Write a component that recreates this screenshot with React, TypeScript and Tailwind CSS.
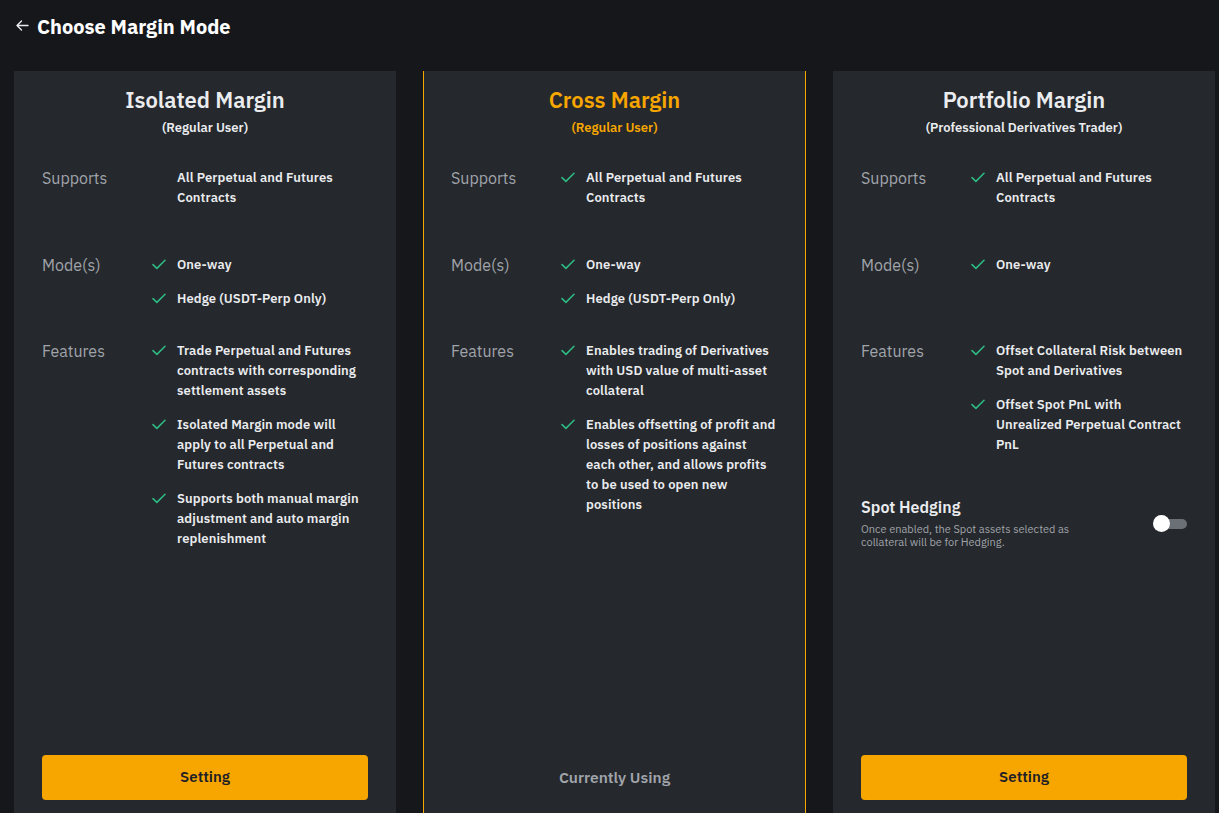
import React from "react";

type Item = { text: string; nowrap?: boolean };
type Section = { label: string; items: Item[]; check: boolean; pad: string };

type Mode = {
  title: string;
  subtitle: string;
  active: boolean;
  sections: Section[];
  hedging?: boolean;
};

const t = (text: string): Item => ({ text });

const modes: Mode[] = [
  {
    title: "Isolated Margin",
    subtitle: "(Regular User)",
    active: false,
    sections: [
      { label: "Supports", items: [t("All Perpetual and Futures Contracts")], check: false, pad: "pb-[47px]" },
      { label: "Mode(s)", items: [t("One-way"), t("Hedge (USDT-Perp Only)")], check: true, pad: "pb-[32px]" },
      {
        label: "Features",
        items: [
          t("Trade Perpetual and Futures contracts with corresponding settlement assets"),
          t("Isolated Margin mode will apply to all Perpetual and Futures contracts"),
          t("Supports both manual margin adjustment and auto margin replenishment"),
        ],
        check: true,
        pad: "",
      },
    ],
  },
  {
    title: "Cross Margin",
    subtitle: "(Regular User)",
    active: true,
    sections: [
      { label: "Supports", items: [t("All Perpetual and Futures Contracts")], check: true, pad: "pb-[47px]" },
      { label: "Mode(s)", items: [t("One-way"), t("Hedge (USDT-Perp Only)")], check: true, pad: "pb-[32px]" },
      {
        label: "Features",
        items: [
          t("Enables trading of Derivatives with USD value of multi-asset collateral"),
          {
            text: "Enables offsetting of profit and\nlosses of positions against\neach other, and allows profits\nto be used to open new\npositions",
            nowrap: true,
          },
        ],
        check: true,
        pad: "",
      },
    ],
  },
  {
    title: "Portfolio Margin",
    subtitle: "(Professional Derivatives Trader)",
    active: false,
    hedging: true,
    sections: [
      { label: "Supports", items: [t("All Perpetual and Futures Contracts")], check: true, pad: "pb-[47px]" },
      { label: "Mode(s)", items: [t("One-way")], check: true, pad: "pb-[66px]" },
      {
        label: "Features",
        items: [
          t("Offset Collateral Risk between Spot and Derivatives"),
          t("Offset Spot PnL with Unrealized Perpetual Contract PnL"),
        ],
        check: true,
        pad: "",
      },
    ],
  },
];

function Check({ show }: { show: boolean }) {
  return (
    <div className="w-[25px] shrink-0 pt-[4px]">
      {show && (
        <svg width="14" height="11" viewBox="0 0 14 11" fill="none">
          <path d="M1 5.6 L4.9 9.4 L13 1.3" stroke="#2ebd85" strokeWidth="1.5" strokeLinecap="round" strokeLinejoin="round" />
        </svg>
      )}
    </div>
  );
}

function Card({ mode }: { mode: Mode }) {
  return (
    <div
      className={`h-[760px] shrink-0 bg-[#25282c] flex flex-col ${
        mode.active ? "w-[383px] px-[27px] border-x border-[#f7a600]" : "w-[382px] px-[28px]"
      }`}
    >
      <div className="flex flex-col items-center pt-[14px]">
        <div
          className={`text-[22px] leading-[30px] font-semibold ${
            mode.active ? "text-[#f7a600]" : "text-[#eaecef]"
          }`}
        >
          {mode.title}
        </div>
        <div
          className={`text-[13px] leading-[16px] font-semibold mt-[5px] ${
            mode.active ? "text-[#f7a600]" : "text-[#eaecef]"
          }`}
        >
          {mode.subtitle}
        </div>
      </div>
      <div className="flex flex-col pt-[32px]">
        {mode.sections.map((s) => (
          <div key={s.label} className={`flex ${s.pad}`}>
            <div className="w-[110px] shrink-0 text-[16px] leading-[20px] text-[#a0a4ab]">{s.label}</div>
            <div className="flex flex-col gap-[14px] flex-1">
              {s.items.map((it) => (
                <div key={it.text} className="flex">
                  <Check show={s.check} />
                  <div
                    className={`text-[13px] leading-[20px] font-semibold text-[#eaecef] w-[188px] tracking-[0.1px] ${
                      it.nowrap ? "whitespace-pre" : ""
                    }`}
                  >
                    {it.text}
                  </div>
                </div>
              ))}
            </div>
          </div>
        ))}
      </div>
      {mode.hedging && (
        <div className="flex items-start justify-between mt-[41px]">
          <div className="flex flex-col">
            <div className="text-[16px] leading-[22px] font-semibold text-[#eaecef]">Spot Hedging</div>
            <div className="text-[11px] leading-[13px] text-[#a0a4ab] mt-[5px] w-[230px]">
              Once enabled, the Spot assets selected as collateral will be for Hedging.
            </div>
          </div>
          <div className="relative w-[30px] h-[10px] rounded-full bg-[#6b6f76] mt-[23px]">
            <div className="absolute left-[-4px] top-[-4px] w-[17px] h-[17px] rounded-full bg-white" />
          </div>
        </div>
      )}
      <div className="flex-1" />
      <div className="pb-[31px]">
        {mode.active ? (
          <div className="h-[45px] flex items-center justify-center text-[15.5px] font-semibold text-[#a0a4ab]">
            Currently Using
          </div>
        ) : (
          <button className="w-full h-[45px] rounded-[4px] bg-[#f7a600] text-[15px] font-semibold text-[#1e2026]">
            Setting
          </button>
        )}
      </div>
    </div>
  );
}

export default function App() {
  return (
    <div
      className="w-[1219px] h-[813px] overflow-hidden bg-[#16171b] flex flex-col"
      style={{ fontFamily: '"IBM Plex Sans", "Noto Sans", Roboto, sans-serif' }}
    >
      <div className="h-[52px] shrink-0 flex items-center pl-[16px] gap-[8px] pt-[2px]">
        <svg width="13" height="11" viewBox="0 0 13 11" fill="none" className="-mt-[4px]">
          <path d="M12 5.5 H1.5 M5.5 1 L1 5.5 L5.5 10" stroke="#eaecef" strokeWidth="1.4" strokeLinecap="round" strokeLinejoin="round" />
        </svg>
        <div className="text-[20px] font-bold text-white leading-[28px]">Choose Margin Mode</div>
      </div>
      <div className="flex gap-[27px] pl-[14px] pt-[19px] shrink-0">
        {modes.map((m) => (
          <Card key={m.title} mode={m} />
        ))}
      </div>
    </div>
  );
}
